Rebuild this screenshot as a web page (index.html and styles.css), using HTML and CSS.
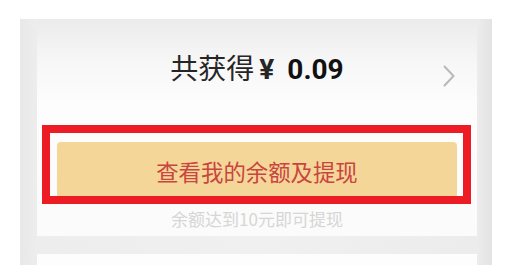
FILE: index.html
```html
<!DOCTYPE html>
<html lang="zh-CN">
<head>
<meta charset="utf-8">
<link rel="stylesheet" href="styles.css">
</head>
<body>
<div class="page">
  <div class="panel">
    <div class="card">
      <div class="total-row">
        <span class="spacer"></span>
        <span class="total">共获得<span class="yen">¥</span><span class="amount">0.09</span></span>
        <svg class="chevron" width="12" height="22" viewBox="0 0 12 22"><polyline points="1.5,1.5 10.5,11 1.5,20.5" fill="none" stroke="#b9b9b9" stroke-width="2" stroke-linecap="round" stroke-linejoin="round"/></svg>
      </div>
      <div class="btn">查看我的余额及提现</div>
      <div class="hint">余额达到10元即可提现</div>
    </div>
    <div class="card-next"></div>
  </div>
  <div class="highlight"></div>
</div>
</body>
</html>
```
FILE: styles.css
```css
html, body {
  margin: 0;
  padding: 0;
  background: #ffffff;
}
body {
  font-family: "Noto Sans CJK SC", "Noto Sans", sans-serif;
  width: 515px;
  height: 265px;
  overflow: hidden;
}
.page {
  position: relative;
  height: 265px;
  box-sizing: border-box;
  padding: 19px 0 0 20px;
}
.panel {
  width: 472px;
  height: 246px;
  box-sizing: border-box;
  padding: 0 15px 0 17px;
  background: linear-gradient(to right, #e8e8e8 0, #ededed 17px, #f0f0f0 50%, #ececec 457px, #e3e3e3 472px);
}
.card {
  height: 217px;
  box-sizing: border-box;
  padding-top: 30px;
  background: linear-gradient(#ebebeb 0, #f6f6f6 40px, #fdfdfd 85px, #fbfbfb 100%);
  display: flex;
  flex-direction: column;
}
.total-row {
  display: grid;
  grid-template-columns: 1fr auto 1fr;
  align-items: center;
  height: 36px;
}
.total {
  font-size: 28px;
  line-height: 36px;
  color: #262626;
  white-space: nowrap;
}
.yen {
  font-family: "Roboto", "Noto Sans CJK SC", sans-serif;
  font-weight: 700;
  font-size: 28px;
  margin-left: 5px;
  margin-right: 13px;
}
.amount {
  font-family: "Roboto", "Noto Sans", sans-serif;
  font-weight: 700;
  color: #111111;
}
.chevron {
  justify-self: end;
  margin-right: 22px;
  margin-top: 14px;
}
.btn {
  margin: 57px 20px 0 20px;
  height: 58px;
  border-radius: 4px;
  background: #f5d699;
  color: #c9453f;
  font-size: 22.4px;
  line-height: 58px;
  text-align: center;
}
.hint {
  margin-top: 7px;
  font-size: 17px;
  line-height: 24px;
  color: #d6d6d6;
  text-align: center;
}
.card-next {
  margin-top: 18px;
  height: 11px;
  background: #fdfdfd;
}
.highlight {
  position: absolute;
  left: 42px;
  top: 125px;
  width: 429px;
  height: 79px;
  box-sizing: border-box;
  border: 8px solid #ed1c24;
}
```
